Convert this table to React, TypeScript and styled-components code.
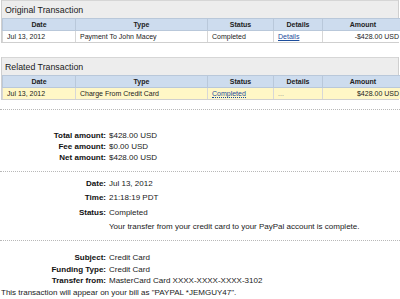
import React from "react";
import styled, { createGlobalStyle } from "styled-components";

const Global = createGlobalStyle`
  html, body { margin: 0; padding: 0; background: #fff; }
  body { font-family: "Liberation Sans", Arial, sans-serif; color: #222; }
`;

const Page = styled.div`
  width: 400px;
  display: flex;
  flex-direction: column;
`;

const Panel = styled.section<{ $gap?: number }>`
  margin: 0 1px ${(p) => p.$gap ?? 0}px 1px;
  border: 1px solid #cfcfcf;
  border-top: none;
`;

const PanelTitle = styled.h2`
  margin: 0;
  height: 17px;
  line-height: 18px;
  padding: 0 3px;
  background: #ededed;
  border-top: 1px solid #d6d6d6;
  font-size: 8.8px;
  font-weight: normal;
  color: #1a1a1a;
`;

const Table = styled.table`
  width: 100%;
  border-collapse: collapse;
  table-layout: fixed;
  font-size: 7px;
`;

const HeadCell = styled.th<{ $w: number }>`
  width: ${(p) => p.$w}px;
  height: 11px;
  padding: 0;
  background: #cddcee;
  border: 1px solid #b9c8da;
  font-weight: bold;
  text-align: center;
  color: #222;
`;

const Row = styled.tr<{ $hl?: boolean }>`
  background: ${(p) => (p.$hl ? "#fff7c6" : "#fff")};
`;

const Cell = styled.td<{ $right?: boolean }>`
  height: 11px;
  padding: 0 4px;
  border-left: 1px solid #d7d7d7;
  border-right: 1px solid #d7d7d7;
  text-align: ${(p) => (p.$right ? "right" : "left")};
  white-space: nowrap;
  overflow: hidden;
  color: #1a1a1a;
`;

const Link = styled.a`
  color: #1c4d9c;
  text-decoration: underline;
`;

const DottedLink = styled.span`
  color: #1c4d9c;
  border-bottom: 1px dotted #1c4d9c;
`;

const Muted = styled.span`
  color: #888;
`;

const Separator = styled.hr`
  margin: 0;
  border: none;
  border-top: 1px dotted #b8b8b8;
`;

const Details = styled.div<{ $top: number; $bottom: number; $row: number }>`
  display: grid;
  grid-template-columns: 106px 1fr;
  column-gap: 3px;
  grid-auto-rows: ${(p) => p.$row}px;
  align-items: center;
  padding: ${(p) => p.$top}px 0 ${(p) => p.$bottom}px;
  font-size: 8px;
`;

const Label = styled.div`
  text-align: right;
  font-weight: bold;
  color: #111;
`;

const Value = styled.div`
  color: #1a1a1a;
  white-space: nowrap;
`;

const Note = styled.div`
  font-size: 8px;
  color: #1a1a1a;
  padding-left: 1px;
  margin-top: 1px;
`;

const cols = [
  { label: "Date", w: 72 },
  { label: "Type", w: 131 },
  { label: "Status", w: 65 },
  { label: "Details", w: 48 },
  { label: "Amount", w: 80 },
];

const Head = () => (
  <thead>
    <tr>
      {cols.map((c) => (
        <HeadCell key={c.label} $w={c.w}>
          {c.label}
        </HeadCell>
      ))}
    </tr>
  </thead>
);

export default function App() {
  return (
    <>
      <Global />
      <Page>
        <Panel $gap={14}>
          <PanelTitle>Original Transaction</PanelTitle>
          <Table>
            <Head />
            <tbody>
              <Row>
                <Cell>Jul 13, 2012</Cell>
                <Cell>Payment To John Macey</Cell>
                <Cell>Completed</Cell>
                <Cell>
                  <Link href="#">Details</Link>
                </Cell>
                <Cell $right>-$428.00 USD</Cell>
              </Row>
            </tbody>
          </Table>
        </Panel>

        <Panel $gap={9}>
          <PanelTitle>Related Transaction</PanelTitle>
          <Table>
            <Head />
            <tbody>
              <Row $hl>
                <Cell>Jul 13, 2012</Cell>
                <Cell>Charge From Credit Card</Cell>
                <Cell>
                  <DottedLink>Completed</DottedLink>
                </Cell>
                <Cell>
                  <Muted>...</Muted>
                </Cell>
                <Cell $right>$428.00 USD</Cell>
              </Row>
            </tbody>
          </Table>
        </Panel>

        <Separator />
        <Details $top={20} $bottom={8} $row={11}>
          <Label>Total amount:</Label>
          <Value>$428.00 USD</Value>
          <Label>Fee amount:</Label>
          <Value>$0.00 USD</Value>
          <Label>Net amount:</Label>
          <Value>$428.00 USD</Value>
        </Details>

        <Separator />
        <Details $top={4} $bottom={6} $row={14.5}>
          <Label>Date:</Label>
          <Value>Jul 13, 2012</Value>
          <Label>Time:</Label>
          <Value>21:18:19 PDT</Value>
          <Label>Status:</Label>
          <Value>Completed</Value>
          <span />
          <Value>Your transfer from your credit card to your PayPal account is complete.</Value>
        </Details>

        <Separator />
        <Details $top={11} $bottom={0} $row={11.5}>
          <Label>Subject:</Label>
          <Value>Credit Card</Value>
          <Label>Funding Type:</Label>
          <Value>Credit Card</Value>
          <Label>Transfer from:</Label>
          <Value>MasterCard Card XXXX-XXXX-XXXX-3102</Value>
        </Details>
        <Note>This transaction will appear on your bill as "PAYPAL *JEMGUY47".</Note>
      </Page>
    </>
  );
}
